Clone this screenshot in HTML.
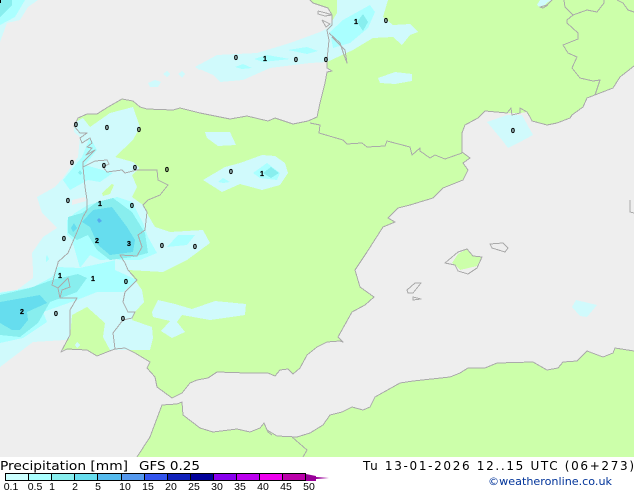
<!DOCTYPE html>
<html><head><meta charset="utf-8"><style>
html,body{margin:0;padding:0;background:#fff;width:634px;height:490px;overflow:hidden}
svg{display:block}
.l{font:bold 7px "Liberation Sans",sans-serif;fill:#000;stroke:#000;stroke-width:.25;text-anchor:middle}
.t{font:12px "DejaVu Sans",sans-serif;fill:#000}
.k{font:10.5px "Liberation Sans",sans-serif;fill:#000;text-anchor:middle}
</style></head><body>
<svg width="634" height="490" viewBox="0 0 634 490" xmlns="http://www.w3.org/2000/svg">
<rect width="634" height="490" fill="#fff"/>
<rect width="634" height="457" fill="#eeeeee"/>
<g fill="#ccffaa" shape-rendering="crispEdges">
<polygon points="310,0 313,3 328,8 332,15 332,25 327,30 329,40 327,60 327,68 332,71 327,72 325,83 320,103 317,117 308,121 293,124 275,118 268,121 247,116 230,119 200,113 180,108 173,110 147,109 140,107 133,101 122,99 108,107 97,114 87,114 78,118 74,126 80,133 87,133 80,138 86,155 83,162 83,167 85,187 87,200 87,210 83,217 77,232 68,253 58,262 55,273 60,298 77,298 70,310 70,335 62,350 87,350 97,356 107,352 115,349 125,348 135,353 150,362 147,368 155,377 157,387 172,398 182,393 190,383 197,380 208,378 217,372 247,373 268,373 275,376 280,370 288,369 293,374 300,368 307,355 317,347 327,342 340,341 343,342 338,337 352,312 365,305 374,297 367,292 360,287 355,270 367,252 383,227 395,222 388,218 398,208 410,205 433,198 443,188 463,180 468,170 463,163 470,158 462,152 462,133 465,125 478,118 485,111 507,113 520,113 527,112 530,117 532,121 547,125 557,123 570,118 572,115 583,107 587,98 613,88 620,77 634,66 634,0"/>
<polygon points="137,457 150,437 162,405 177,404 182,402 183,415 200,428 213,432 237,429 250,432 260,428 264,423 267,430 277,436 297,437 310,433 323,425 330,415 342,412 352,407 363,410 370,407 375,397 400,383 413,381 450,377 460,373 468,368 485,368 497,363 533,362 547,370 558,368 563,362 577,361 587,351 603,357 613,353 615,348 634,351 634,457"/>
<polygon points="452,263 458,254 467,249 473,256 482,257 477,266 460,270 456,266"/>
</g>
<g fill="#d0fafc" shape-rendering="crispEdges">
<polygon points="195,67 217,55 257,53 290,43 320,32 328,28 337,13 337,0 388,0 383,17 393,25 410,24 418,32 410,35 402,45 393,37 373,38 353,50 327,62 310,63 270,68 243,80 220,82 213,75"/>
<polygon points="378,78 395,72 412,74 412,81 395,84 380,83"/>
<polygon points="205,132 230,132 236,145 218,146 207,138"/>
<polygon points="203,180 225,167 240,163 262,155 275,156 285,163 288,173 280,185 262,190 240,184 222,192"/>
<polygon points="487,122 507,115 522,115 533,135 520,142 508,148 502,140"/>
<polygon points="572,307 576,300 597,305 587,317 580,316"/>
<polygon points="74,123 83,118 90,127 110,113 133,107 140,127 133,140 115,157 133,162 140,168 132,175 137,187 132,197 143,205 148,215 155,227 170,232 203,230 210,243 187,260 163,272 128,270 142,290 144,302 135,312 132,320 152,327 153,338 150,350 137,350 110,350 103,337 105,323 87,307 72,315 70,338 65,340 33,342 0,367 0,292 17,290 33,278 33,270 32,253 43,237 57,228 42,213 37,197 55,187 63,178 78,157 80,137 74,132"/>
<polygon points="0,42 7,23 20,20 28,7 38,0 0,0"/>
<polygon points="148,83 155,80 161,82 158,87 150,87"/>
<polygon points="163,74 167,71 170,74 167,77"/>
<polygon points="178,74 182,71 185,74 182,78"/>
<polygon points="195,67 200,64 200,70"/>
<polygon points="537,5 540,0 552,0 548,2 541,8"/>
<polygon points="153,317 152,312 158,300 175,304 192,309 215,301 246,304 245,315 210,320 182,315 177,322 185,332 172,338 161,331 170,321"/>
<polygon points="75,345 77,342 80,345 77,348"/>
</g>
<g fill="#ccffaa" shape-rendering="crispEdges">
<polygon points="102,193 112,184 114,185 110,194 103,196"/>
</g>
<g fill="#eeeeee" shape-rendering="crispEdges">
<polygon points="72,200 85,197 86,201 72,205"/>
</g>
<g fill="#aaffff" shape-rendering="crispEdges">
<polygon points="330,32 343,20 370,5 375,12 368,28 350,43 333,48"/>
<polygon points="254,59 267,55 290,59 263,62"/>
<polygon points="288,50 307,47 318,51 307,54"/>
<polygon points="235,67 243,64 252,68 242,69"/>
<polygon points="253,173 267,163 280,173 277,180 260,178"/>
<polygon points="218,182 223,178 230,182 223,183"/>
<polygon points="63,180 82,157 90,137 97,150 85,165 113,173 100,182 88,180 70,190"/>
<polygon points="88,205 117,197 132,202 143,223 148,237 157,253 140,260 115,260 115,270 137,280 123,292 97,292 77,300 43,312 47,322 23,338 0,343 0,293 33,287 52,277 58,267 80,268 72,240 67,235 67,220 75,213"/>
<polygon points="167,247 178,235 195,235 187,245"/>
<polygon points="0,25 15,17 25,0 0,0"/>
<polygon points="46,257 47,255 49,259 46,262"/>
</g>
<g fill="#d0fafc" shape-rendering="crispEdges">
<polygon points="80,268 90,255 100,260 120,259 103,263 84,267"/>
</g>
<g fill="#88eeee" shape-rendering="crispEdges">
<polygon points="357,22 363,14 368,22 363,31"/>
<polygon points="263,173 271,167 279,173 271,178"/>
<polygon points="68,217 82,213 97,202 113,198 132,212 145,233 148,253 133,257 110,260 97,250 88,235 77,240 68,233"/>
<polygon points="0,295 30,288 52,280 78,274 87,278 77,292 50,302 38,323 20,337 0,335"/>
<polygon points="0,17 12,5 12,0 0,0"/>
<polygon points="78,173 80,170 82,173 80,175"/>
</g>
<g fill="#66ddee" shape-rendering="crispEdges">
<polygon points="82,222 93,210 112,207 127,227 135,240 133,252 110,255 98,245 90,227"/>
<polygon points="71,228 74,223 77,228 73,232"/>
<polygon points="0,302 40,295 47,303 27,312 28,320 20,330 12,330 0,323"/>
</g>
<polygon points="97,220 99,218 102,221 99,223" fill="#55aaee"/>
<rect x="0" y="0" width="1" height="3" fill="#000"/>
<g fill="none" stroke="#aaaaaa" stroke-width="1" stroke-linejoin="round" shape-rendering="crispEdges">
<polyline points="310,0 313,3 328,8 332,15 332,25 327,30 329,40 327,60 327,68 332,71 327,72 325,83 320,103 317,117 308,121 293,124 275,118 268,121 247,116 230,119 200,113 180,108 173,110 147,109 140,107 133,101 122,99 108,107 97,114 87,114 78,118 74,126 80,133 87,133 80,138 82,143 90,138 92,143 87,147 92,148 86,155 95,150 83,162 83,167 85,187 87,200 87,210 83,217 77,232 68,253 58,262 58,263 55,273 52,285 58,288 60,298 77,298 70,310 70,335 61,352 67,349 87,350 97,356 107,352 115,349 125,348 135,353 150,362 147,368 155,377 157,387 172,398 182,393 190,383 197,380 208,378 217,372 247,373 268,373 275,376 280,370 288,369 293,374 300,368 307,355 317,347 327,342 340,341 343,342 338,337 352,312 365,305 374,297 367,292 360,287 355,270 367,252 383,227 395,222 388,218 398,208 410,205 433,198 443,188 463,180 468,170 463,163 470,158 462,152 462,133 465,125 478,118 485,111 507,113 511,108 512,115 520,113 520,108 527,112 530,117 532,121 547,125 557,123 570,118 572,115 583,107 587,98 613,88 620,77 634,66"/>
<polyline points="58,288 68,278 70,287 62,290 60,298"/>
<polyline points="329,33 340,43 344,55 347,63 345,50 332,37"/>
<polyline points="318,11 326,13 332,15 325,16 318,14 318,11"/>
<polyline points="322,20 330,24 326,27 322,20"/>
<polyline points="310,123 320,125 319,133 343,140 347,144 362,143 367,147 385,146 387,141 410,147 412,155 420,148 420,151 430,158 435,155 445,159 462,153"/>
<polyline points="83,167 95,161 107,160 109,164 103,167 107,172 122,170 125,173 137,170 145,170 157,170 158,180 168,185 160,195 148,200 143,205 147,212 145,230 138,235 142,247 137,256 120,255 125,263 128,270 137,280 125,292 123,302 128,312 135,312 132,318 123,320 113,333 115,349"/>
<polyline points="137,457 150,437 162,405 177,404 182,402 183,415 200,428 213,432 237,429 250,432 260,428 264,423 267,430 277,436 297,437 310,433 323,425 330,415 342,412 352,407 363,410 370,407 375,397 400,383 413,381 450,377 460,373 468,368 485,368 497,363 533,362 547,370 558,368 563,362 577,361 587,351 603,357 613,353 615,348 634,351"/>
<polyline points="264,423 268,432 272,435"/>
<polyline points="292,437 307,450 303,457"/>
<polygon points="445,263 458,252 467,249 473,256 482,257 477,268 468,274 458,271 455,265"/>
<polygon points="490,244 503,243 508,248 505,252 492,248"/>
<polygon points="407,290 415,283 421,283 413,293 408,293"/>
<polygon points="413,297 421,299 413,300"/>
<polyline points="630,200 630,212 634,213"/>
<polyline points="564,0 565,7 573,15 587,10 597,12 604,3 604,0"/>
<polyline points="573,15 567,20 567,23 578,33 578,39 563,45 568,53 577,57 572,68 580,78 593,81 600,80 595,95"/>
<polyline points="617,0 623,3 628,10 634,12"/>
<polyline points="552,0 547,5 540,7 543,8 548,5"/>
</g>
<g class="x">
<text class="l" x="76" y="127">0</text><text class="l" x="107" y="130">0</text><text class="l" x="139" y="132">0</text>
<text class="l" x="72" y="165">0</text><text class="l" x="104" y="168">0</text><text class="l" x="135" y="170">0</text><text class="l" x="167" y="172">0</text>
<text class="l" x="68" y="203">0</text><text class="l" x="100" y="206">1</text><text class="l" x="132" y="208">0</text>
<text class="l" x="64" y="241">0</text><text class="l" x="97" y="243">2</text><text class="l" x="129" y="246">3</text><text class="l" x="162" y="248">0</text><text class="l" x="195" y="249">0</text>
<text class="l" x="60" y="278">1</text><text class="l" x="93" y="281">1</text><text class="l" x="126" y="284">0</text>
<text class="l" x="22" y="314">2</text><text class="l" x="56" y="316">0</text><text class="l" x="123" y="321">0</text>
<text class="l" x="236" y="60">0</text><text class="l" x="265" y="61">1</text><text class="l" x="296" y="62">0</text><text class="l" x="326" y="62">0</text>
<text class="l" x="356" y="24">1</text><text class="l" x="386" y="23">0</text>
<text class="l" x="231" y="174">0</text><text class="l" x="262" y="176">1</text><text class="l" x="513" y="133">0</text>
</g>
<g shape-rendering="crispEdges">
<rect x="5.5" y="473.5" width="23" height="7" fill="#ccffff"/>
<rect x="28.5" y="473.5" width="23" height="7" fill="#aaffff"/>
<rect x="51.5" y="473.5" width="23" height="7" fill="#88eeee"/>
<rect x="74.5" y="473.5" width="23" height="7" fill="#66ddee"/>
<rect x="97.5" y="473.5" width="24" height="7" fill="#55bbee"/>
<rect x="121.5" y="473.5" width="23" height="7" fill="#5599ee"/>
<rect x="144.5" y="473.5" width="23" height="7" fill="#3355ee"/>
<rect x="167.5" y="473.5" width="23" height="7" fill="#1122bb"/>
<rect x="190.5" y="473.5" width="23" height="7" fill="#000099"/>
<rect x="213.5" y="473.5" width="23" height="7" fill="#8800ee"/>
<rect x="236.5" y="473.5" width="23" height="7" fill="#bb00ee"/>
<rect x="259.5" y="473.5" width="23" height="7" fill="#ee00ee"/>
<rect x="282.5" y="473.5" width="23" height="7" fill="#bb00aa"/>
</g>
<polygon points="306,474 316,476 316,477 329,478 316,479 316,481 306,481" fill="#990099"/>
<g fill="none" stroke="#000" stroke-width="1" shape-rendering="crispEdges">
<rect x="5.5" y="473.5" width="300" height="7"/>
<path d="M28.5 473v8M51.5 473v8M74.5 473v8M97.5 473v8M121.5 473v8M144.5 473v8M167.5 473v8M190.5 473v8M213.5 473v8M236.5 473v8M259.5 473v8M282.5 473v8"/>
</g>
<text class="t" x="0" y="470" textLength="128" lengthAdjust="spacingAndGlyphs">Precipitation [mm]</text>
<text class="t" x="139" y="470" textLength="61" lengthAdjust="spacingAndGlyphs">GFS 0.25</text>
<text class="t" x="363" y="470" textLength="271" lengthAdjust="spacing">Tu 13-01-2026 12..15 UTC (06+273)</text>
<text class="k" x="11" y="490">0.1</text><text class="k" x="35" y="490">0.5</text><text class="k" x="52" y="490">1</text><text class="k" x="75" y="490">2</text><text class="k" x="98" y="490">5</text>
<text class="k" x="125" y="490">10</text><text class="k" x="148" y="490">15</text><text class="k" x="171" y="490">20</text><text class="k" x="194" y="490">25</text><text class="k" x="217" y="490">30</text><text class="k" x="240" y="490">35</text><text class="k" x="263" y="490">40</text><text class="k" x="286" y="490">45</text><text class="k" x="309" y="490">50</text>
<text x="488" y="485" textLength="124" lengthAdjust="spacingAndGlyphs" style="font:11px 'DejaVu Sans',sans-serif;fill:#003399">©weatheronline.co.uk</text>
</svg>
</body></html>
